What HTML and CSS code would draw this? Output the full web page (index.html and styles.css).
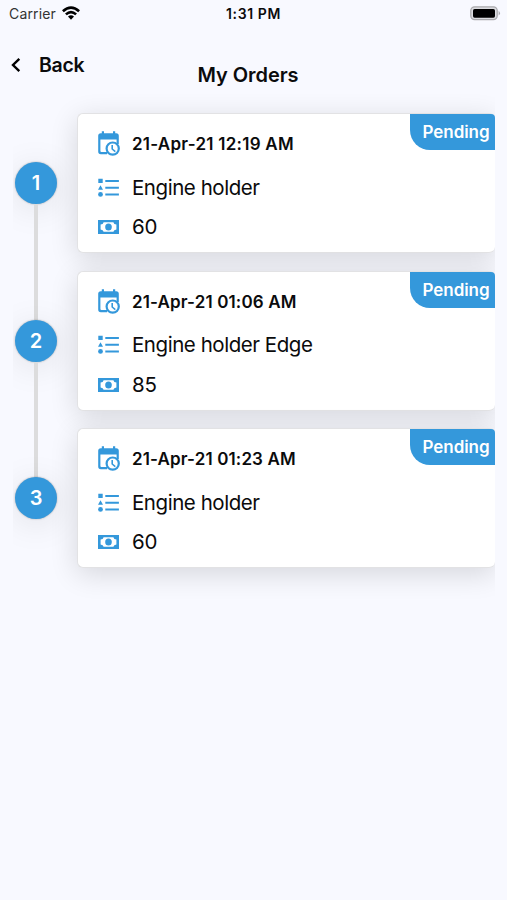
FILE: index.html
```html
<!DOCTYPE html>
<html lang="en">
<head>
<meta charset="utf-8">
<meta name="viewport" content="width=device-width, initial-scale=1">
<title>My Orders</title>
<link rel="stylesheet" href="styles.css">
</head>
<body>
<svg class="defs" aria-hidden="true">
  <symbol id="calendar" viewBox="0 0 22 26">
    <path d="M2.8 2.2H3.8V.2H6V2.2H15V.2H17.2V2.2H18.2Q20.8 2.2 20.8 4.8V13H18.6V8.4H2.4V20Q2.4 21 3.4 21H9V23.2H2.8Q.2 23.2 .2 20.6V4.8Q.2 2.2 2.8 2.2Z" fill="currentColor"/>
    <circle cx="14.7" cy="17.6" r="6.1" fill="#fff" stroke="currentColor" stroke-width="2.2"/>
    <path d="M14.2 14V18L17.3 20.6" fill="none" stroke="currentColor" stroke-width="1.6"/>
  </symbol>
  <symbol id="list" viewBox="0 0 22 20">
    <path d="M.3 .8H4.7V5H.3ZM2.5 7.2L5 11.8H0ZM7.3 2H20.9V4H7.3ZM7.3 8.8H20.9V10.8H7.3ZM7.3 15.4H20.9V17.4H7.3Z" fill="currentColor"/>
    <circle cx="2.5" cy="16.4" r="2.4" fill="currentColor"/>
  </symbol>
  <symbol id="money" viewBox="0 0 22 14">
    <path d="M0 0H21V14H0Z" fill="currentColor"/>
    <path d="M5.6 2.2H15.4Q15.8 4.3 18.4 4.6V9.4Q15.8 9.7 15.4 11.8H5.6Q5.2 9.7 2.6 9.4V4.6Q5.2 4.3 5.6 2.2Z" fill="#fff"/>
    <ellipse cx="10.5" cy="7" rx="3.3" ry="3.5" fill="currentColor"/>
  </symbol>
</svg>

<div class="status">
  <div class="carrier"><span>Carrier</span>
    <svg class="wifi" viewBox="0 0 18 14"><g fill="none" stroke="#000" stroke-width="2.6"><path d="M.9 5.3Q9 -2.2 17.1 5.3"/><path d="M3.9 8.4Q9 3.8 14.1 8.4"/></g><path d="M6 10.6Q9 8.1 12 10.6L9 13.8Z"/></svg>
  </div>
  <div class="clock">1:31 PM</div>
  <svg class="battery" viewBox="0 0 31 15"><rect x=".8" y=".8" width="26.4" height="12.8" rx="3.8" fill="#dcdce0" stroke="#aaaaad" stroke-width="1.3"/><rect x="3" y="2.9" width="22" height="8.8" rx="1.6"/><path d="M28.6 4.8Q31.4 7.2 28.6 9.6Z" fill="#aaaaad"/></svg>
</div>

<header class="header">
  <a class="back"><svg class="chevron" viewBox="0 0 10 16"><path d="M8.3 1.8L2 8L8.3 14.2" fill="none" stroke="#000" stroke-width="2.4"/></svg><span>Back</span></a>
  <h1 class="title">My Orders</h1>
</header>

<main class="timeline">
  <section class="order">
    <div class="rail"><span class="step">1</span></div>
    <article class="card">
      <span class="badge">Pending</span>
      <div class="row date"><svg class="i-cal"><use href="#calendar"/></svg><span class="loose">21-Apr-21 12:19 AM</span></div>
      <div class="row item"><svg class="i-list"><use href="#list"/></svg><span>Engine holder</span></div>
      <div class="row price"><svg class="i-money"><use href="#money"/></svg><span>60</span></div>
    </article>
  </section>
  <section class="order">
    <div class="rail"><span class="step">2</span></div>
    <article class="card">
      <span class="badge">Pending</span>
      <div class="row date"><svg class="i-cal"><use href="#calendar"/></svg><span>21-Apr-21 01:06 AM</span></div>
      <div class="row item"><svg class="i-list"><use href="#list"/></svg><span>Engine holder Edge</span></div>
      <div class="row price"><svg class="i-money"><use href="#money"/></svg><span>85</span></div>
    </article>
  </section>
  <section class="order">
    <div class="rail"><span class="step">3</span></div>
    <article class="card">
      <span class="badge">Pending</span>
      <div class="row date"><svg class="i-cal"><use href="#calendar"/></svg><span>21-Apr-21 01:23 AM</span></div>
      <div class="row item"><svg class="i-list"><use href="#list"/></svg><span>Engine holder</span></div>
      <div class="row price"><svg class="i-money"><use href="#money"/></svg><span>60</span></div>
    </article>
  </section>
</main>
</body>
</html>
```
FILE: styles.css
```css
* { box-sizing: border-box; }

body {
  margin: 0;
  min-height: 900px;
  background: #f8f9ff;
  color: #0b0b0c;
  font-family: Inter, "Liberation Sans", sans-serif;
}

.defs { position: absolute; width: 0; height: 0; }

.status {
  display: grid;
  grid-template-columns: 1fr auto 1fr;
  align-items: center;
  height: 26px;
  padding: 0 6px 0 9px;
  font-size: 14px;
}
.carrier { display: flex; align-items: center; gap: 6px; color: #333; letter-spacing: 0.15px; }
.wifi { width: 18px; height: 14px; }
.clock { margin-right: 3px; font-weight: 600; font-size: 14px; letter-spacing: 0.6px; }
.battery { justify-self: end; width: 31px; height: 15px; margin-top: 1px; }

.header {
  display: grid;
  grid-template-columns: 1fr auto 1fr;
  height: 87px;
  padding: 27px 22px 0 11px;
}
.back {
  display: flex;
  align-items: center;
  gap: 18px;
  height: 24px;
  font-size: 19.5px;
  font-weight: 600;
  letter-spacing: -0.3px;
}
.chevron { width: 10px; height: 16px; }
.title {
  margin: 10px 0 0;
  font-size: 20px;
  line-height: 24px;
  font-weight: 600;
  letter-spacing: -0.05px;
}

.timeline {
  margin: 0 12px 0 13px;
  overflow-x: clip;
}

.order {
  display: grid;
  grid-template-columns: 64px 1fr;
  height: 157.7px;
}
.rail {
  display: flex;
  align-items: center;
  height: 140px;
  padding-left: 2px;
  position: relative;
}
.order:not(:last-child) .rail::after {
  content: "";
  position: absolute;
  left: 21px;
  top: 91px;
  width: 4px;
  height: 116px;
  background: #dcdcdd;
}
.step {
  display: grid;
  place-items: center;
  width: 42px;
  height: 42px;
  border-radius: 50%;
  background: #3498db;
  color: #fff;
  font-size: 20px;
  font-weight: 600;
  box-shadow: 0 0 2px rgba(0, 0, 0, 0.3), 0 5px 34px rgba(0, 0, 0, 0.1);
}

.card {
  position: relative;
  height: 140px;
  padding: 17px 20px 0;
  border: 1px solid #e2e2e4;
  border-right: 0;
  border-radius: 6px;
  background: #fff;
  box-shadow: 0 6px 28px rgba(0, 0, 0, 0.14);
}
.badge {
  position: absolute;
  top: 0;
  right: 0;
  width: 85px;
  height: 36px;
  padding-left: 12.5px;
  border-radius: 0 4px 0 20px;
  background: #3498db;
  color: #fff;
  font-size: 17px;
  font-weight: 600;
  line-height: 36px;
  letter-spacing: -0.05px;
}

.row {
  display: grid;
  grid-template-columns: 22px 1fr;
  column-gap: 12px;
  align-items: center;
  white-space: nowrap;
}
.row svg { color: #3498db; }
.i-cal { width: 22px; height: 26px; }
.i-list { width: 22px; height: 20px; margin-top: 1px; }
.i-money { width: 22px; height: 14px; margin-top: 1px; }
.date { height: 26px; font-size: 17px; font-weight: 600; letter-spacing: 0.14px; }
.loose { letter-spacing: 0.25px; }
.item { height: 40px; margin-top: 10px; font-size: 20.5px; letter-spacing: -0.45px; }
.price { height: 39px; font-size: 20.5px; letter-spacing: -0.2px; }
```
